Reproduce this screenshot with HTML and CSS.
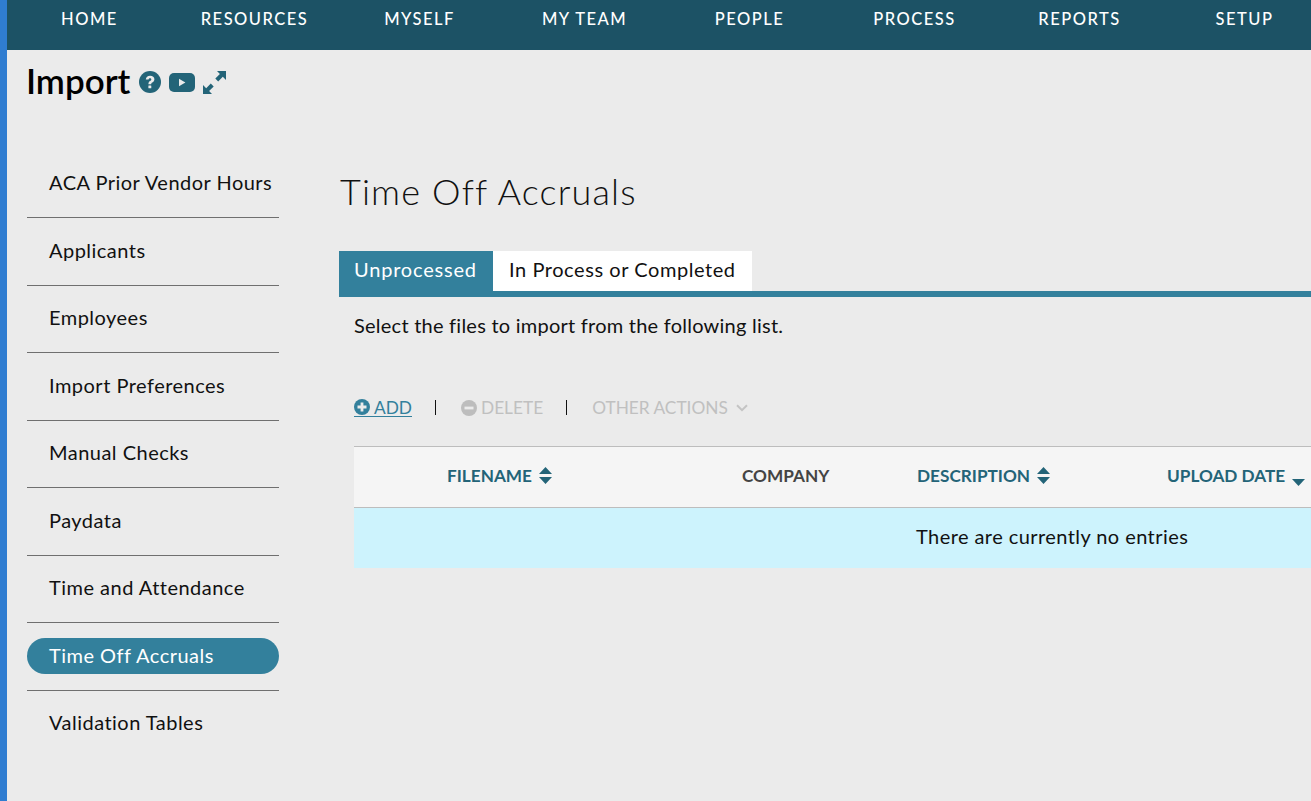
FILE: index.html
```html
<!DOCTYPE html>
<html lang="en">
<head>
<meta charset="utf-8">
<title>Import</title>
<link rel="stylesheet" href="styles.css">
</head>
<body>
<div class="app">
  <nav class="topnav">
    <a>HOME</a><a>RESOURCES</a><a>MYSELF</a><a>MY TEAM</a><a>PEOPLE</a><a>PROCESS</a><a>REPORTS</a><a>SETUP</a>
  </nav>
  <header class="pagehead">
    <h1>Import</h1>
    <svg class="ic-help" viewBox="0 0 22 22"><circle cx="11" cy="11" r="11" fill="#236478"/><path d="M6.800 8.600C6.900 6.100 8.700 4.700 11.100 4.700c2.500 0 4.300 1.400 4.300 3.600 0 1.600-.9 2.500-2.100 3.200-.8.500-1.100.9-1.100 1.800H9.400c0-1.700.5-2.600 1.600-3.300.9-.6 1.300-1 1.300-1.600 0-.7-.5-1.100-1.300-1.100-.8 0-1.300.5-1.400 1.300z" fill="#ebebeb"/><rect x="9.400" y="14.400" width="2.900" height="2.900" rx=".4" fill="#ebebeb"/></svg>
    <svg class="ic-video" viewBox="0 0 26 19"><rect width="26" height="19" rx="5" fill="#236478"/><path d="M10 5.800v7.400l6.400-3.700z" fill="#ebebeb"/></svg>
    <svg class="ic-expand" viewBox="0 0 23 23"><path d="M14 0h9v9l-3.200-3.200-4.600 4.600-2.900-2.900 4.600-4.600zM9 23H0v-9l3.200 3.200 4.600-4.600 2.900 2.900-4.600 4.600z" fill="#236478"/></svg>
  </header>
  <div class="columns">
    <aside class="sidebar">
      <a>ACA Prior Vendor Hours</a>
      <a>Applicants</a>
      <a>Employees</a>
      <a>Import Preferences</a>
      <a>Manual Checks</a>
      <a>Paydata</a>
      <a>Time and Attendance</a>
      <a class="current">Time Off Accruals</a>
      <a>Validation Tables</a>
    </aside>
    <main class="content">
      <h2>Time Off Accruals</h2>
      <div class="tabs">
        <a class="tab active">Unprocessed</a>
        <a class="tab">In Process or Completed</a>
      </div>
      <div class="panel">
        <p class="intro">Select the files to import from the following list.</p>
        <div class="toolbar">
          <a class="tool add"><svg viewBox="0 0 16 16"><circle cx="8" cy="8" r="8" fill="#33809c"/><path d="M6.600 3.500h2.800v3.100h3.100v2.800H9.400v3.100H6.600V9.400H3.500V6.600h3.100z" fill="#ebebeb"/></svg>ADD</a>
          <span class="sep"></span>
          <a class="tool off"><svg viewBox="0 0 16 16"><circle cx="8" cy="8" r="8" fill="#bdbdbd"/><rect x="3.500" y="6.600" width="9" height="2.800" fill="#ebebeb"/></svg>DELETE</a>
          <span class="sep"></span>
          <a class="tool off">OTHER ACTIONS<svg class="chev" viewBox="0 0 12 8"><path d="M1 1.200l5 5 5-5" fill="none" stroke="#c4c4c4" stroke-width="2"/></svg></a>
        </div>
        <div class="grid">
          <div class="gridhead">
            <span class="col sortable">FILENAME<svg viewBox="0 0 13 17"><path d="M6.500 0L13 7H0zM0 10h13l-6.500 7z" fill="#236478"/></svg></span>
            <span class="col plain">COMPANY</span>
            <span class="col sortable">DESCRIPTION<svg viewBox="0 0 13 17"><path d="M6.500 0L13 7H0zM0 10h13l-6.500 7z" fill="#236478"/></svg></span>
            <span class="col sortable desc">UPLOAD DATE<svg viewBox="0 0 13 17"><path d="M0 10h13l-6.500 7z" fill="#236478"/></svg></span>
          </div>
          <div class="gridempty">There are currently no entries</div>
        </div>
      </div>
    </main>
  </div>
</div>
</body>
</html>
```
FILE: styles.css
```css
* { box-sizing: border-box; }
html, body { margin: 0; height: 100%; overflow: hidden; }
body {
  background: #ebebeb;
  border-left: 7px solid #2f7dd1;
  font-family: "Lato", "Liberation Sans", sans-serif;
  color: #111;
}
.app { width: 1304px; height: 801px; overflow: hidden; }
.topnav { display: flex; height: 50px; background: #1c5265; }
.topnav a {
  flex: 0 0 165px; height: 38px; line-height: 38px; text-align: center;
  color: #fff; font-size: 16.500px; font-weight: 500; letter-spacing: 1.500px;
}
.pagehead { display: flex; align-items: center; height: 62px; padding: 2px 0 0 20px; }
.pagehead h1 { margin: -5px 9px 0 -1px; font-size: 35px; font-weight: 600; color: #000; line-height: 62px; }
.ic-help { width: 22px; height: 22px; margin-right: 8px; }
.ic-video { width: 26px; height: 19px; margin-right: 8px; }
.ic-expand { width: 23px; height: 23px; }
.columns { display: flex; }
.sidebar { width: 252px; margin-left: 20px; margin-top: 38.500px; flex: none; }
.sidebar a {
  display: flex; align-items: center; height: 67.500px; padding-left: 22px; padding-bottom: 3px;
  font-size: 20px; letter-spacing: .48px; color: #111; border-bottom: 1px solid #6f6f6f;
}
.sidebar a:last-child { border-bottom: 0; padding-bottom: 5px; }
.sidebar a.current { position: relative; color: #fff; z-index: 0; }
.sidebar a.current::before {
  content: ""; position: absolute; left: 0; right: 0; top: 15px; height: 36px;
  background: #33809c; border-radius: 18px; z-index: -1;
}
.content { flex: none; width: 972px; margin-left: 60px; }
.content h2 { margin: 0 0 0 1px; padding-top: 56px; height: 139px; font-size: 36px; font-weight: 300; line-height: 46px; color: #111; letter-spacing: 1.150px; }
.tabs { display: flex; height: 46px; border-bottom: 6px solid #33809c; }
.tab { height: 40px; padding: 0 16px; line-height: 37px; font-size: 20px; letter-spacing: .56px; background: #fff; color: #111; }
.tab.active { background: #33809c; color: #fff; width: 154px; padding: 0 15px; letter-spacing: .8px; }
.panel { padding-left: 15px; }
.intro { margin: 0; padding-top: 15px; height: 75px; font-size: 20px; line-height: 26px; letter-spacing: .24px; }
.toolbar { display: flex; align-items: center; height: 35px; margin-top: 18px; margin-bottom: 1px; font-size: 17.300px; }
.tool { display: inline-flex; align-items: center; }
.tool svg { width: 16px; height: 16px; margin-right: 4px; }
.tool.add { color: #33809c; height: 18px; border-bottom: 1px solid #33809c; }
.tool.off { color: #c0c0c0; }
.tool svg.chev { width: 12px; height: 8px; margin: 0 0 0 8px; }
.sep { width: 1px; height: 15px; background: #111; margin: 0 25px 0 23px; }
.grid { margin-top: 21px; }
.gridhead {
  display: grid; grid-template-columns: 295px 175px 250px 1fr; height: 62px;
  align-items: center; padding: 0 0 4px 93px;
  background: #f5f5f5; border-top: 1px solid #bdbdbd; border-bottom: 1px solid #bdbdbd;
  font-size: 17.200px; font-weight: 700;
}
.col { display: flex; align-items: center; white-space: nowrap; }
.sortable { color: #236478; }
.plain { color: #444; }
.col svg { width: 13px; height: 17px; margin-left: 7px; }
.desc svg { position: relative; top: 2px; }
.gridempty { height: 60px; background: #cdf3fd; padding-left: 562px; line-height: 57px; font-size: 20px; letter-spacing: .43px; color: #111; }
```
